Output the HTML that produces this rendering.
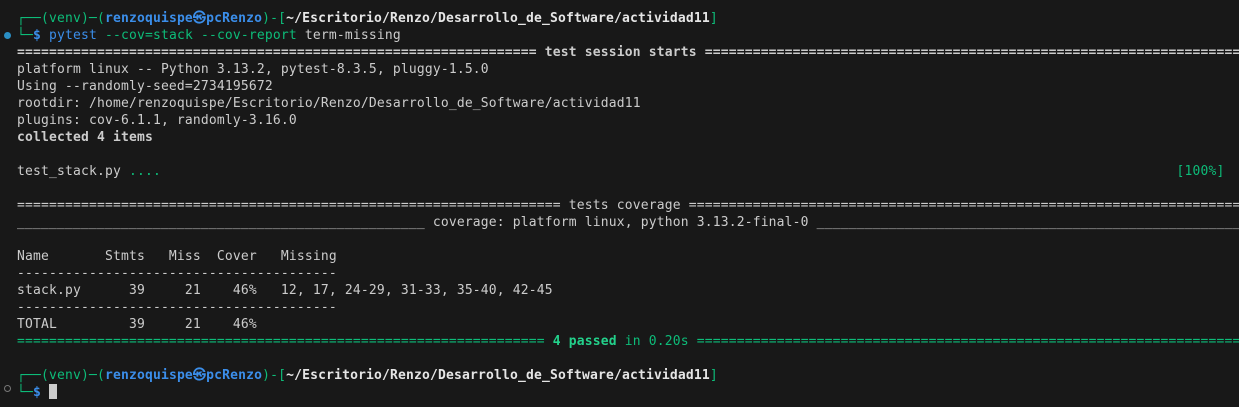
<!DOCTYPE html>
<html><head><meta charset="utf-8"><style>
body{margin:0;background:#181818;width:1239px;height:407px;overflow:hidden;position:relative}
pre{position:absolute;left:17px;top:10px;margin:0;font-family:"DejaVu Sans Mono","Liberation Mono",monospace;font-size:13px;line-height:17px;letter-spacing:0.17px;color:#cccccc;white-space:pre}
.g{color:#0dbc79}.b{color:#3b8eea;font-weight:bold}.bl{color:#3b8eea}.w{color:#e5e5e5;font-weight:bold}.B{font-weight:bold}.gb{color:#23d18b;font-weight:bold}
.dot{position:absolute;left:4px;width:7px;height:7px;border-radius:50%}
.cur{display:inline-block;width:8px;height:15px;background:#cccccc;vertical-align:-3px}
</style></head><body>
<div class="dot" style="top:32px;background:#2a8fc4"></div>
<div class="dot" style="top:385px;border:1px solid #777;width:5px;height:5px"></div>
<pre><span class="g">┌──(venv)─(</span><span class="b">renzoquispe㉿pcRenzo</span><span class="g">)-[</span><span class="w">~/Escritorio/Renzo/Desarrollo_de_Software/actividad11</span><span class="g">]</span>
<span class="g">└─</span><span class="b">$</span> <span class="bl">pytest</span> <span class="g">--cov=stack --cov-report</span> term-missing
<span class="B">================================================================= test session starts ======================================================================</span>
platform linux -- Python 3.13.2, pytest-8.3.5, pluggy-1.5.0
Using --randomly-seed=2734195672
rootdir: /home/renzoquispe/Escritorio/Renzo/Desarrollo_de_Software/actividad11
plugins: cov-6.1.1, randomly-3.16.0
<span class="B">collected 4 items</span>

test_stack.py <span class="g">....</span>                                                                                                                               <span class="g">[100%]</span>

==================================================================== tests coverage ========================================================================
___________________________________________________ coverage: platform linux, python 3.13.2-final-0 ________________________________________________________

Name       Stmts   Miss  Cover   Missing
----------------------------------------
stack.py      39     21    46%   12, 17, 24-29, 31-33, 35-40, 42-45
----------------------------------------
TOTAL         39     21    46%
<span class="g">================================================================== <span class="gb">4 passed</span> in 0.20s =======================================================================</span>

<span class="g">┌──(venv)─(</span><span class="b">renzoquispe㉿pcRenzo</span><span class="g">)-[</span><span class="w">~/Escritorio/Renzo/Desarrollo_de_Software/actividad11</span><span class="g">]</span>
<span class="g">└─</span><span class="b">$</span> <span class="cur"></span></pre>
</body></html>
